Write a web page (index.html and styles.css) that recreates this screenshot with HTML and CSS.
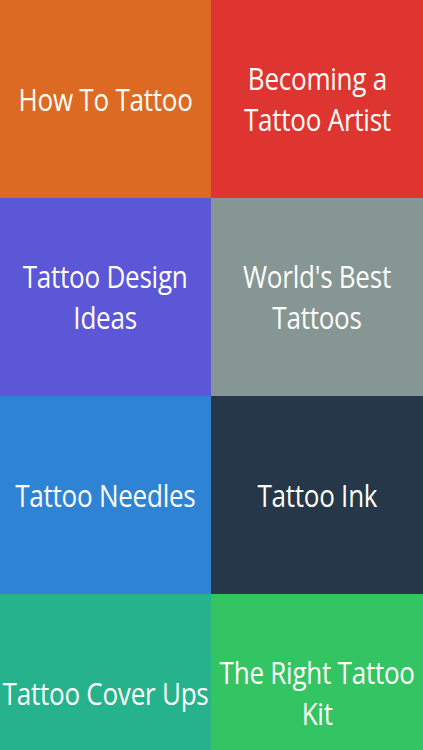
FILE: index.html
```html
<!DOCTYPE html>
<html>
<head>
<meta charset="utf-8">
<link rel="stylesheet" href="styles.css">
</head>
<body>
<div class="grid">
  <div class="tile orange"><span class="label">How To Tattoo</span></div>
  <div class="tile red"><span class="label">Becoming a<br>Tattoo Artist</span></div>
  <div class="tile purple"><span class="label">Tattoo Design<br>Ideas</span></div>
  <div class="tile gray"><span class="label">World's Best<br>Tattoos</span></div>
  <div class="tile blue"><span class="label">Tattoo Needles</span></div>
  <div class="tile navy"><span class="label">Tattoo Ink</span></div>
  <div class="tile teal"><span class="label">Tattoo Cover Ups</span></div>
  <div class="tile green"><span class="label">The Right Tattoo<br>Kit</span></div>
</div>
</body>
</html>
```

FILE: styles.css
```css
html, body {
  margin: 0;
  padding: 0;
  width: 423px;
  height: 750px;
  overflow: hidden;
}
.grid {
  display: grid;
  grid-template-columns: 211px 212px;
  grid-auto-rows: 198px;
}
.tile {
  display: flex;
  align-items: center;
  justify-content: center;
  text-align: center;
  color: #fffdf8;
  font-family: "Open Sans", sans-serif;
  font-size: 31px;
  line-height: 41px;
  letter-spacing: -0.3px;
  white-space: nowrap;
}
.label {
  display: inline-block;
  transform: scaleX(0.84);
}
.orange { background: #dd6a22; }
.red { background: #df3530; }
.purple { background: #5b57d7; }
.gray { background: #859694; }
.blue { background: #2f83d5; }
.navy { background: #253748; }
.teal { background: #26b28c; }
.green { background: #33c564; }
```
